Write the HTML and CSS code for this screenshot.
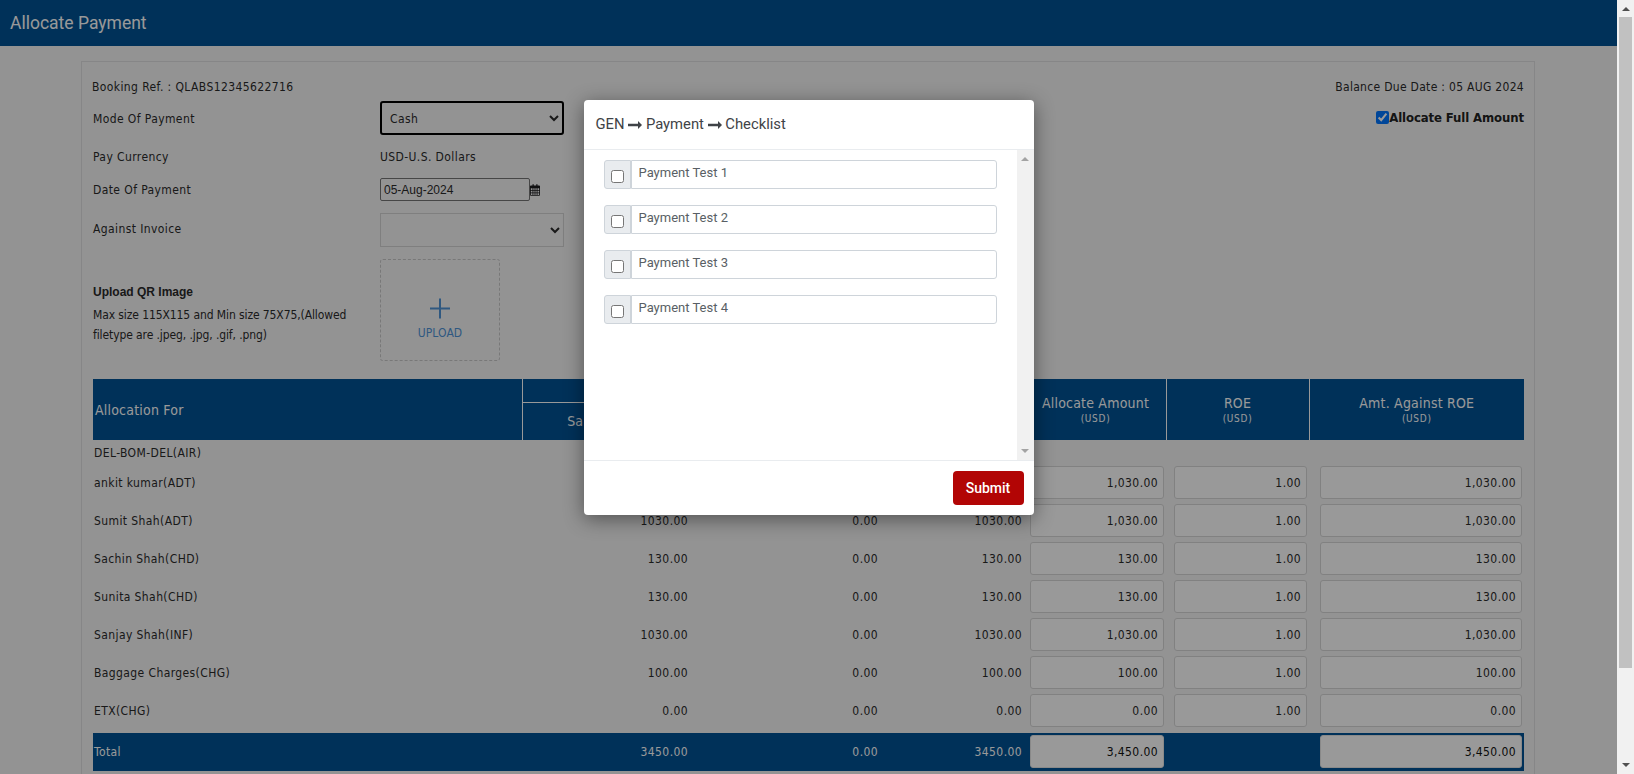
FILE: index.html
```html
<!DOCTYPE html>
<html>
<head>
	<title>Allocate Payment</title>
	<link rel="stylesheet" href="styles.css">
</head>
<body>
	<div id="app">
		<div id="page">
			<div id="topbar">Allocate Payment</div>

			<div id="panel">
				<div class="info-row">
					<span>Booking Ref. : QLABS12345622716</span>
					<span class="due-date">Balance Due Date : 05 AUG 2024</span>
				</div>

				<div class="form-area">
					<div class="form-left">
						<div class="row row-mode">
							<label class="lbl">Mode Of Payment</label>
							<select class="sel sel-focus"><option>Cash</option></select>
						</div>
						<div class="row row-currency">
							<label class="lbl">Pay Currency</label>
							<span>USD-U.S. Dollars</span>
						</div>
						<div class="row row-date">
							<label class="lbl">Date Of Payment</label>
							<input class="date" type="text" value="05-Aug-2024">
							<svg class="cal" viewBox="0 0 12 14" width="10" height="12">
								<path fill="#1d1d1f" fill-rule="evenodd" d="M3 0h1.500v1.500h3V0H9v1.500h2c.6 0 1 .4 1 1V13c0 .6-.4 1-1 1H1c-.6 0-1-.4-1-1V2.500c0-.6.4-1 1-1h2zM1 5v2h2V5zm3 0v2h1.500V5zm2.500 0v2H8V5zM9 5v2h2V5zM1 8v2h2V8zm3 0v2h1.500V8zm2.500 0v2H8V8zM9 8v2h2V8zM1 11v2h2v-2zm3 0v2h1.500v-2zm2.500 0v2H8v-2zM9 11v2h2v-2z"/>
							</svg>
						</div>
						<div class="row row-invoice">
							<label class="lbl lbl-top">Against Invoice</label>
							<select class="sel"><option></option></select>
						</div>
						<div class="row row-upload">
							<div class="upload-text">
								<b>Upload QR Image</b>
								<p>Max size 115X115 and Min size 75X75,(Allowed filetype are .jpeg, .jpg, .gif, .png)</p>
							</div>
							<div class="upload-box">
								<svg viewBox="0 0 20 20" width="20" height="21">
									<path d="M10 0v20M0 10h20" stroke="#4f93d6" stroke-width="2" fill="none"/>
								</svg>
								<span>UPLOAD</span>
							</div>
						</div>
					</div>
					<label class="full-amount"><input type="checkbox" checked>Allocate Full Amount</label>
				</div>

				<table id="alloc">
					<colgroup>
						<col class="c-name"><col class="c-sale"><col class="c-paid"><col class="c-due">
						<col class="c-alloc"><col class="c-roe"><col class="c-against">
					</colgroup>
					<thead>
						<tr class="head-top">
							<th rowspan="2" class="left">Allocation For</th>
							<th colspan="3">Amount</th>
							<th rowspan="2" class="th-alloc">Allocate Amount<small>(USD)</small></th>
							<th rowspan="2">ROE<small>(USD)</small></th>
							<th rowspan="2">Amt. Against ROE<small>(USD)</small></th>
						</tr>
						<tr class="head-sub">
							<th>Sale Amount</th><th>Paid</th><th>Balance</th>
						</tr>
					</thead>
					<tbody>
						<tr class="sector"><td colspan="7">DEL-BOM-DEL(AIR)</td></tr>
						<tr><td>ankit kumar(ADT)</td><td class="num">1030.00</td><td class="num">0.00</td><td class="num">1030.00</td><td><input class="amt" readonly value="1,030.00"></td><td class="roe"><input class="amt" readonly value="1.00"></td><td class="against"><input class="amt" readonly value="1,030.00"></td></tr>
						<tr><td>Sumit Shah(ADT)</td><td class="num">1030.00</td><td class="num">0.00</td><td class="num">1030.00</td><td><input class="amt" readonly value="1,030.00"></td><td class="roe"><input class="amt" readonly value="1.00"></td><td class="against"><input class="amt" readonly value="1,030.00"></td></tr>
						<tr><td>Sachin Shah(CHD)</td><td class="num">130.00</td><td class="num">0.00</td><td class="num">130.00</td><td><input class="amt" readonly value="130.00"></td><td class="roe"><input class="amt" readonly value="1.00"></td><td class="against"><input class="amt" readonly value="130.00"></td></tr>
						<tr><td>Sunita Shah(CHD)</td><td class="num">130.00</td><td class="num">0.00</td><td class="num">130.00</td><td><input class="amt" readonly value="130.00"></td><td class="roe"><input class="amt" readonly value="1.00"></td><td class="against"><input class="amt" readonly value="130.00"></td></tr>
						<tr><td>Sanjay Shah(INF)</td><td class="num">1030.00</td><td class="num">0.00</td><td class="num">1030.00</td><td><input class="amt" readonly value="1,030.00"></td><td class="roe"><input class="amt" readonly value="1.00"></td><td class="against"><input class="amt" readonly value="1,030.00"></td></tr>
						<tr><td>Baggage Charges(CHG)</td><td class="num">100.00</td><td class="num">0.00</td><td class="num">100.00</td><td><input class="amt" readonly value="100.00"></td><td class="roe"><input class="amt" readonly value="1.00"></td><td class="against"><input class="amt" readonly value="100.00"></td></tr>
						<tr><td>ETX(CHG)</td><td class="num">0.00</td><td class="num">0.00</td><td class="num">0.00</td><td><input class="amt" readonly value="0.00"></td><td class="roe"><input class="amt" readonly value="1.00"></td><td class="against"><input class="amt" readonly value="0.00"></td></tr>
						<tr class="gap"><td colspan="7"></td></tr>
						<tr class="total"><td>Total</td><td class="num">3450.00</td><td class="num">0.00</td><td class="num">3450.00</td><td><input class="amt" readonly value="3,450.00"></td><td class="roe"></td><td class="against"><input class="amt" readonly value="3,450.00"></td></tr>
					</tbody>
				</table>
			</div>

			<div id="backdrop">
				<div id="modal">
					<div class="modal-head">
						GEN
						<svg class="arrow" viewBox="0 0 14 8" width="14" height="8"><path d="M0 2.800h10V0l4 4-4 4V5.200H0z" fill="#3f4347"/></svg>
						Payment
						<svg class="arrow" viewBox="0 0 14 8" width="14" height="8"><path d="M0 2.800h10V0l4 4-4 4V5.200H0z" fill="#3f4347"/></svg>
						Checklist
					</div>
					<div class="modal-body">
						<div class="check-list">
							<div class="check-item"><span class="addon"><input type="checkbox"></span><input class="check-text" type="text" value="Payment Test 1"></div>
							<div class="check-item"><span class="addon"><input type="checkbox"></span><input class="check-text" type="text" value="Payment Test 2"></div>
							<div class="check-item"><span class="addon"><input type="checkbox"></span><input class="check-text" type="text" value="Payment Test 3"></div>
							<div class="check-item"><span class="addon"><input type="checkbox"></span><input class="check-text" type="text" value="Payment Test 4"></div>
						</div>
						<div class="bar bar-modal"><i class="up"></i><i class="down"></i></div>
					</div>
					<div class="modal-foot"><button class="submit">Submit</button></div>
				</div>
			</div>
		</div>

		<div class="bar bar-page"><i class="up"></i><span class="thumb"></span><i class="down"></i></div>
	</div>
</body>
</html>
```

FILE: styles.css
```css
body{
	margin: 0;
	font-family: "DejaVu Sans Condensed", "Liberation Sans", sans-serif;
	font-size: 12px;
	letter-spacing: .4px;
	color: #2b2b2b;
	background: #f5f5f6;
	overflow: hidden;
}

#app{
	display: flex;
	height: 774px;
}

#page{
	flex: 1;
	position: relative;
	overflow: hidden;
}

#topbar{
	height: 46px;
	line-height: 46px;
	padding-left: 10px;
	background: #005295;
	color: #fff;
	font-family: Roboto, sans-serif;
	font-size: 17.5px;
	letter-spacing: 0;
}

#panel{
	margin: 15px 82px 0 81px;
	border: 1px solid #e0e0e2;
	padding: 16px 10px 0 11px;
	height: 900px;
}

.info-row{
	display: flex;
	justify-content: space-between;
	height: 18px;
	line-height: 18px;
	margin: 0 0 5px -1px;
}

.due-date{
	letter-spacing: .3px;
}

.form-area{
	display: flex;
	justify-content: space-between;
	align-items: flex-start;
}

.row{
	display: flex;
	align-items: center;
}

.lbl{
	width: 287px;
}

.lbl-top{
	align-self: flex-start;
	margin-top: 9px;
}

.row-mode{ height: 34px; margin-bottom: 11px; }
.row-currency{ height: 21px; margin-bottom: 11px; }
.row-date{ height: 23px; margin-bottom: 12px; }
.row-invoice{ height: 34px; margin-bottom: 12px; }
.row-upload{ height: 102px; margin-bottom: 18px; }

.row-mode .lbl{
	padding-top: 1px;
}

.sel{
	width: 184px;
	height: 34px;
	padding: 1px 5px 0;
	background: transparent;
	border: 1px solid #d4d4d4;
	border-radius: 0;
	font: inherit;
	letter-spacing: inherit;
	color: inherit;
}

.sel-focus{
	border: 2px solid #000;
	border-radius: 3px;
	padding: 1px 4px 0;
}

.date{
	width: 150px;
	height: 23px;
	box-sizing: border-box;
	padding: 0 3px;
	border: 1px solid #767676;
	border-radius: 2px;
	font: 12px "Liberation Sans", sans-serif;
	letter-spacing: 0;
	color: inherit;
	background: transparent;
}

.upload-text{
	width: 275px;
	margin-right: 12px;
	margin-top: 6px;
	line-height: 20px;
}

.upload-text b{
	font-family: "Liberation Sans", sans-serif;
	letter-spacing: 0;
}

.upload-text p{
	margin: 3px 0 0;
	letter-spacing: -.1px;
}

.upload-box{
	width: 120px;
	height: 102px;
	box-sizing: border-box;
	border: 1px dashed #c8c8c8;
	border-radius: 3px;
	display: flex;
	flex-direction: column;
	align-items: center;
	justify-content: center;
	color: #4f93d6;
	padding-top: 17px;
	letter-spacing: .1px;
}

.upload-box span{
	margin-top: 7px;
}

.full-amount{
	display: flex;
	align-items: center;
	font-weight: bold;
	font-size: 13px;
	letter-spacing: -.1px;
	color: #222;
	height: 16px;
	margin: 8px 0 0;
}

.full-amount input{
	margin: 0;
}

#alloc{
	width: 1431px;
	border-collapse: collapse;
	table-layout: fixed;
}

.c-name{ width: 429px; }
.c-sale{ width: 173px; }
.c-paid{ width: 190px; }
.c-due{ width: 144px; }
.c-alloc{ width: 137px; }
.c-roe{ width: 143px; }
.c-against{ width: 215px; }

#alloc th{
	background: #005295;
	color: #fff;
	font-size: 14px;
	font-weight: normal;
	letter-spacing: .2px;
	text-align: center;
	border-left: 1px solid #fff;
	padding: 0;
}

#alloc th.left{
	text-align: left;
	padding-left: 2px;
	border-left: 0;
}

#alloc th.th-alloc{
	padding-right: 4px;
}

#alloc th small{
	display: block;
	font-size: 10px;
	letter-spacing: .7px;
	margin-top: 2px;
}

.head-top{ height: 23px; }
.head-sub{ height: 38px; }

.head-sub th{
	border-top: 1px solid #fff;
}

#alloc td{
	padding: 0 2px 0 1px;
	height: 38px;
	vertical-align: middle;
}

#alloc tr.sector td{
	height: 23px;
	padding-top: 1px;
}

#alloc tr.gap td{
	height: 3px;
}

#alloc td.num{
	text-align: right;
	padding-right: 7px;
}

#alloc td.roe{
	padding-left: 8px;
}

#alloc td.against{
	padding-left: 11px;
}

.amt{
	display: block;
	width: 100%;
	height: 33px;
	margin-top: -1px;
	box-sizing: border-box;
	border: 1px solid #d8d8d8;
	border-radius: 3px;
	background: #fff;
	padding: 0 5px 0 0;
	text-align: right;
	font: inherit;
	letter-spacing: inherit;
	color: inherit;
}

.total td{
	background: #005295;
	color: #fff;
}

.total .amt{
	color: #111;
	border-color: #e4e4e4;
}

#backdrop{
	position: absolute;
	top: 0;
	right: 0;
	bottom: 0;
	left: 0;
	background: rgba(0,0,0,.4);
}

#modal{
	width: 450px;
	margin: 100px auto 0;
	background: #fff;
	border-radius: 4px;
	box-shadow: 0 4px 20px rgba(0,0,0,.45);
	font-family: Roboto, sans-serif;
	letter-spacing: 0;
}

.modal-head{
	height: 49px;
	line-height: 48px;
	padding-left: 12px;
	font-size: 14.8px;
	color: #3f4347;
	border-bottom: 1px solid #e9ecef;
}

.modal-body{
	display: flex;
	height: 310px;
}

.check-list{
	flex: 1;
	padding: 10px 20px 0;
}

.check-item{
	display: flex;
	height: 29px;
	margin-bottom: 16px;
}

.addon{
	width: 27px;
	box-sizing: border-box;
	background: #e9ecef;
	border: 1px solid #ced4da;
	border-radius: 3px 0 0 3px;
	display: flex;
	align-items: center;
	justify-content: center;
}

.addon input{
	margin: 4px 0 0;
}

.check-text{
	flex: 1;
	min-width: 0;
	box-sizing: border-box;
	height: 29px;
	border: 1px solid #ced4da;
	border-radius: 0 3px 3px 0;
	padding: 0 7px 4px;
	font: 13px Roboto, sans-serif;
	color: #595f65;
}

.modal-foot{
	height: 54px;
	border-top: 1px solid #e9ecef;
	display: flex;
	justify-content: flex-end;
	align-items: center;
	padding: 0 10px;
}

.submit{
	width: 71px;
	height: 34px;
	border: 0;
	border-radius: 4px;
	background: #b20505;
	color: #fff;
	font: 500 14px Roboto, sans-serif;
}

.bar{
	background: #f1f1f1;
	display: flex;
	flex-direction: column;
	justify-content: space-between;
	align-items: center;
	width: 17px;
}

.bar i{
	display: block;
	width: 0;
	height: 0;
	margin: 7px 0;
	border-left: 4px solid transparent;
	border-right: 4px solid transparent;
}

.bar .up{
	border-bottom: 4px solid #a3a3a3;
}

.bar .down{
	border-top: 4px solid #a3a3a3;
}

.bar-page .up{
	border-bottom-color: #505050;
	margin-bottom: 6px;
}

.bar-page .down{
	border-top-color: #505050;
}

.thumb{
	width: 13px;
	flex: 0 0 651px;
	margin-bottom: auto;
	background: #c1c1c1;
}
```
